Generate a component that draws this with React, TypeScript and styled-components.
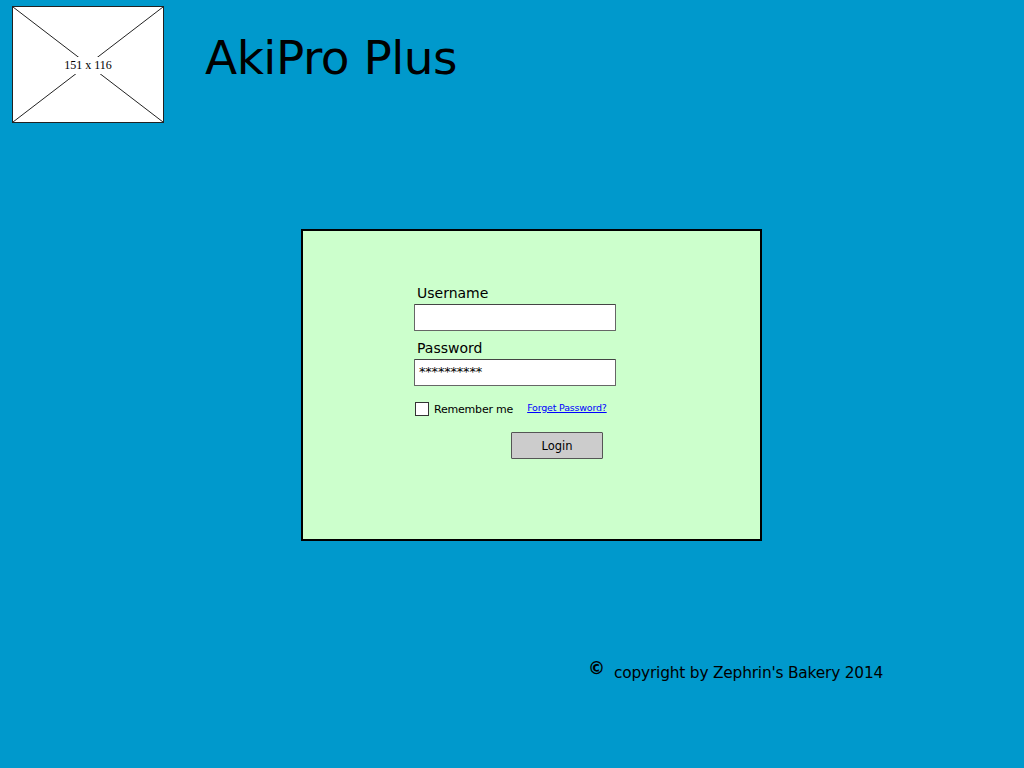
import React from "react";
import styled, { createGlobalStyle } from "styled-components";

const Global = createGlobalStyle`
  html, body { margin: 0; padding: 0; }
  body {
    background: #0099cc;
    font-family: "Comic Sans MS", "DejaVu Sans", sans-serif;
    color: #000;
  }
`;

const Page = styled.div`
  width: 1024px;
  height: 768px;
  background: #0099cc;
  display: flex;
  flex-direction: column;
  overflow: hidden;
`;

const Header = styled.header`
  display: flex;
  align-items: flex-start;
  padding: 6px 0 0 12px;
`;

const Placeholder = styled.div`
  position: relative;
  width: 150px;
  height: 115px;
  background: #fff;
  border: 1px solid #222;
  display: flex;
  align-items: center;
  justify-content: center;
`;

const PlaceholderLines = styled.svg`
  position: absolute;
  inset: 0;
  width: 100%;
  height: 100%;
`;

const PlaceholderLabel = styled.span`
  position: relative;
  font-family: "Liberation Serif", "DejaVu Serif", serif;
  font-size: 12px;
  background: #fff;
  padding: 1px 2px;
  margin-top: 1px;
`;

const Title = styled.h1`
  margin: 28px 0 0 41px;
  font-size: 47px;
  font-weight: normal;
  letter-spacing: -0.5px;
  line-height: 1;
`;

const Panel = styled.section`
  margin: 106px 0 0 301px;
  background: #ccffcc;
  border: 2px solid #000;
  padding: 53px 0 0 111px;
  box-sizing: content-box;
  width: 346px;
  height: 255px;
`;

const Form = styled.div`
  width: 202px;
  display: flex;
  flex-direction: column;
`;

const Label = styled.label`
  font-size: 14px;
  line-height: 18px;
  padding-left: 3px;
  margin-bottom: 2px;
`;

const Input = styled.div<{ $mb: number }>`
  box-sizing: border-box;
  height: 27px;
  background: #fff;
  border: 1.5px solid #666;
  border-top-color: #444;
  border-radius: 1px;
  margin-bottom: ${(p) => p.$mb}px;
  padding: 5px 0 0 4px;
  font-size: 13px;
  font-family: "DejaVu Sans", sans-serif;
  letter-spacing: -0.2px;
  line-height: 14px;
`;

const OptionsRow = styled.div`
  display: flex;
  align-items: center;
  margin-top: 16px;
  padding-left: 1px;
  white-space: nowrap;
  width: 240px;
`;

const Checkbox = styled.span`
  display: inline-block;
  width: 12px;
  height: 12px;
  border: 1.5px solid #333;
  background: #fff;
  margin-right: 5px;
  flex: none;
`;

const Remember = styled.span`
  font-size: 11px;
  letter-spacing: -0.2px;
`;

const ForgotLink = styled.a`
  margin-left: 14px;
  font-size: 9.5px;
  color: #0000ff;
  text-decoration: underline;
  margin-top: -3px;
  letter-spacing: -0.2px;
`;

const ButtonRow = styled.div`
  display: flex;
  margin-top: 16px;
  padding-left: 97px;
`;

const LoginButton = styled.button`
  box-sizing: border-box;
  width: 92px;
  height: 27px;
  background: #cccccc;
  border: 1.5px solid #555;
  border-radius: 1px;
  font-family: inherit;
  font-size: 11.5px;
  color: #000;
  padding: 0;
`;

const Footer = styled.footer`
  display: flex;
  align-items: flex-start;
  margin: 121px 0 0 588px;
`;

const Copy = styled.span`
  font-size: 17px;
  font-weight: bold;
  margin-top: -4px;
  margin-right: 9px;
`;

const FooterText = styled.span`
  font-size: 15.4px;
  letter-spacing: -0.2px;
  margin-top: 2px;
`;

export default function App() {
  return (
    <Page>
      <Global />
      <Header>
        <Placeholder>
          <PlaceholderLines viewBox="0 0 150 115" preserveAspectRatio="none">
            <line x1="0" y1="0" x2="150" y2="115" stroke="#222" strokeWidth="1" />
            <line x1="150" y1="0" x2="0" y2="115" stroke="#222" strokeWidth="1" />
          </PlaceholderLines>
          <PlaceholderLabel>151 x 116</PlaceholderLabel>
        </Placeholder>
        <Title>AkiPro Plus</Title>
      </Header>
      <Panel>
        <Form>
          <Label>Username</Label>
          <Input $mb={8} />
          <Label>Password</Label>
          <Input $mb={0}>**********</Input>
          <OptionsRow>
            <Checkbox />
            <Remember>Remember me</Remember>
            <ForgotLink href="#">Forget Password?</ForgotLink>
          </OptionsRow>
          <ButtonRow>
            <LoginButton>Login</LoginButton>
          </ButtonRow>
        </Form>
      </Panel>
      <Footer>
        <Copy>©</Copy>
        <FooterText>copyright by Zephrin's Bakery 2014</FooterText>
      </Footer>
    </Page>
  );
}
